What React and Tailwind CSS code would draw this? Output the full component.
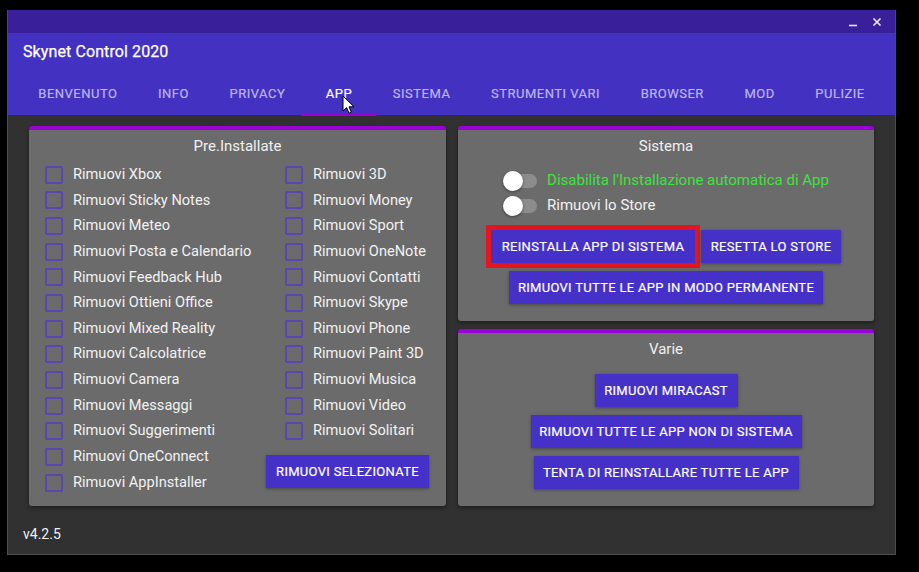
const tabs = ['BENVENUTO', 'INFO', 'PRIVACY', 'APP', 'SISTEMA', 'STRUMENTI VARI', 'BROWSER', 'MOD', 'PULIZIE'];

const leftItems = [
  'Rimuovi Xbox', 'Rimuovi Sticky Notes', 'Rimuovi Meteo', 'Rimuovi Posta e Calendario',
  'Rimuovi Feedback Hub', 'Rimuovi Ottieni Office', 'Rimuovi Mixed Reality', 'Rimuovi Calcolatrice',
  'Rimuovi Camera', 'Rimuovi Messaggi', 'Rimuovi Suggerimenti', 'Rimuovi OneConnect', 'Rimuovi AppInstaller',
];

const rightItems = [
  'Rimuovi 3D', 'Rimuovi Money', 'Rimuovi Sport', 'Rimuovi OneNote', 'Rimuovi Contatti',
  'Rimuovi Skype', 'Rimuovi Phone', 'Rimuovi Paint 3D', 'Rimuovi Musica', 'Rimuovi Video', 'Rimuovi Solitari',
];

function Check({ label }) {
  return (
    <div className="h-[25.67px] flex items-center">
      <span className="w-[18px] h-[18px] border-2 border-[#5a45b3] rounded-[2px] shrink-0" />
      <span className="ml-[10px] text-[14.6px] text-[#f2f2f2] whitespace-nowrap">{label}</span>
    </div>
  );
}

function Btn({ children, className = '' }) {
  return (
    <button className={`h-[33px] px-[8px] bg-[#4531c8] text-white text-[13px] tracking-[0.3px] [-webkit-text-stroke:0.2px_white] whitespace-nowrap shadow-[0_1px_3px_rgba(0,0,0,0.35)] ${className}`}>
      {children}
    </button>
  );
}

function Toggle({ label, green }) {
  return (
    <div className="h-[25px] flex items-center">
      <div className="relative w-[34px] h-[14px] rounded-full bg-[#8c8c8c] shrink-0">
        <span className="absolute left-0 top-[-3px] w-[20px] h-[20px] rounded-full bg-white shadow-[0_1px_3px_rgba(0,0,0,0.45)]" />
      </div>
      <span className={`ml-[10px] text-[15px] whitespace-nowrap ${green ? 'text-[#3fe13f]' : 'text-[#f2f2f2]'}`}>{label}</span>
    </div>
  );
}

function Panel({ title, className = '', children }) {
  return (
    <div className={`bg-[#6b6b6b] border-t-4 border-[#9a00d8] rounded-[3px] shadow-[0_2px_4px_rgba(0,0,0,0.4)] flex flex-col ${className}`}>
      <div className="mt-[6px] h-[20px] flex items-center justify-center text-[15px] text-[#f0f0f0]">{title}</div>
      {children}
    </div>
  );
}

export default function App() {
  return (
    <div className="relative w-[919px] h-[572px] bg-black pt-[10px] pl-[7px] overflow-hidden" style={{ fontFamily: 'Roboto, "Noto Sans", sans-serif' }}>
      <div className="w-[889px] h-[545px] flex flex-col bg-[#313131] border-x border-b border-[#4d4d4d]">

        {/* title bar */}
        <div className="h-[23px] shrink-0 bg-[#3a1f9b] flex items-center justify-end pr-[13px] gap-[14px]">
          <svg width="10" height="10" viewBox="0 0 10 10"><path d="M1 8.5h8" stroke="#e8e6f6" strokeWidth="1.6" /></svg>
          <svg width="10" height="10" viewBox="0 0 10 10"><path d="M1.5 1.5l7 7M8.5 1.5l-7 7" stroke="#f0eef8" strokeWidth="1.6" /></svg>
        </div>

        {/* header */}
        <header className="h-[82px] shrink-0 bg-[#4331c2] flex flex-col">
          <div className="h-[36px] pt-[2px] flex items-center pl-[15px] text-[16px] tracking-[0.1px] [-webkit-text-stroke:0.25px_white] text-white">Skynet Control 2020</div>
          <nav className="h-[46px] flex px-[10px]">
            {tabs.map((t) => (
              <div key={t} className="relative flex-auto flex items-center justify-center pt-[4px]">
                <span className={`text-[13px] tracking-[0.5px] whitespace-nowrap ${t === 'APP' ? 'text-white [-webkit-text-stroke:0.2px_white]' : 'text-[#bdb6ec] [-webkit-text-stroke:0.2px_#bdb6ec]'}`}>{t}</span>
                {t === 'APP' && <span className="absolute bottom-[-1px] left-1/2 -translate-x-1/2 w-[75px] h-[3px] bg-[#9a00d8]" />}
              </div>
            ))}
          </nav>
        </header>

        {/* content */}
        <main className="flex gap-[12px] px-[21px] pt-[11px]">
          <Panel title="Pre.Installate" className="w-[417px] h-[380px]">
            <div className="mt-[6px] flex">
              <div className="w-[237px] pl-[16px] flex flex-col">
                {leftItems.map((l) => <Check key={l} label={l} />)}
              </div>
              <div className="flex flex-col">
                <div className="pl-[19px] flex flex-col">
                  {rightItems.map((l) => <Check key={l} label={l} />)}
                </div>
                <Btn className="mt-[11px] w-[163px]">RIMUOVI SELEZIONATE</Btn>
              </div>
            </div>
          </Panel>

          <div className="w-[416px] flex flex-col gap-[8px]">
            <Panel title="Sistema" className="h-[195px]">
              <div className="mt-[12px] mx-auto w-fit flex flex-col">
                <Toggle label="Disabilita l'Installazione automatica di App" green />
                <Toggle label="Rimuovi lo Store" />
              </div>
              <div className="mt-[12px] flex justify-center gap-[6px]">
                <Btn className="ring-[5px] ring-[#e3151d] w-[204px]">REINSTALLA APP DI SISTEMA</Btn>
                <Btn className="w-[140px]">RESETTA LO STORE</Btn>
              </div>
              <div className="mt-[8px] flex justify-center">
                <Btn className="w-[314px]">RIMUOVI TUTTE LE APP IN MODO PERMANENTE</Btn>
              </div>
            </Panel>

            <Panel title="Varie" className="h-[177px] items-center">
              <div className="mt-[15px] flex flex-col items-center gap-[8px]">
                <Btn className="w-[143px]">RIMUOVI MIRACAST</Btn>
                <Btn className="w-[271px]">RIMUOVI TUTTE LE APP NON DI SISTEMA</Btn>
                <Btn className="w-[265px]">TENTA DI REINSTALLARE TUTTE LE APP</Btn>
              </div>
            </Panel>
          </div>
        </main>

        <footer className="pt-[18px] pl-[15px] h-[20px] leading-[20px] text-[14px] text-[#f0f0f0]">v4.2.5</footer>
      </div>

      {/* mouse cursor */}
      <svg className="absolute left-[342px] top-[95px]" width="13" height="20" viewBox="0 0 13 20">
        <path d="M1 1v15l3.6-3.4 2.4 5.6 2.3-1-2.3-5.4H12z" fill="white" stroke="black" strokeWidth="1" strokeLinejoin="round" />
      </svg>
    </div>
  );
}
